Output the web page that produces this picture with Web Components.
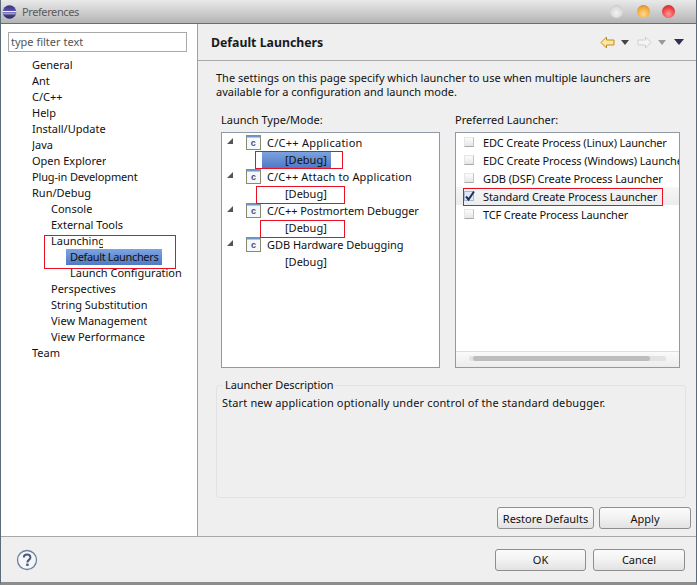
<!DOCTYPE html>
<html>
<head>
<meta charset="utf-8">
<title>Preferences</title>
<style>
html, body { margin: 0; padding: 0; background: #efefef; }
body { font: 11px "Noto Sans", "Liberation Sans", sans-serif; color: #111; }
</style>
</head>
<body>
<pref-window>
  <title-bar slot="title">Preferences</title-bar>
  <pref-tree slot="tree">
    <tree-row>General</tree-row>
    <tree-row>Ant</tree-row>
    <tree-row>C/C++</tree-row>
    <tree-row>Help</tree-row>
    <tree-row>Install/Update</tree-row>
    <tree-row>Java</tree-row>
    <tree-row>Open Explorer</tree-row>
    <tree-row style="letter-spacing:-.15px">Plug-in Development</tree-row>
    <tree-row>Run/Debug</tree-row>
    <tree-row level="1">Console</tree-row>
    <tree-row level="1">External Tools</tree-row>
    <tree-row level="1" clip="52">Launching</tree-row>
    <tree-row level="2" selected style="letter-spacing:-.35px">Default Launchers</tree-row>
    <tree-row level="2" clip="113">Launch Configuration</tree-row>
    <tree-row level="1">Perspectives</tree-row>
    <tree-row level="1" clip="96">String Substitution</tree-row>
    <tree-row level="1">View Management</tree-row>
    <tree-row level="1">View Performance</tree-row>
    <tree-row>Team</tree-row>
  </pref-tree>
  <pref-page slot="page"></pref-page>
  <dialog-footer slot="footer"></dialog-footer>
</pref-window>

<script>
// small helper, every element just sets its own shadow html
function shadow(el, html) {
    el.attachShadow({ mode: 'open' });
    el.shadowRoot.innerHTML = html;
}

class PrefWindow extends HTMLElement {
    connectedCallback() {
        shadow(this, `
<style>
:host { display: flex; flex-direction: column; position: relative; width: 697px; height: 585px; overflow: hidden; box-sizing: border-box;
  border-left: 1px solid #5b6b7a; border-right: 1px solid #5b6b7a; border-bottom: 3px solid #8d8d8d; background: #efefef; }
.main { display: flex; height: 512px; }
.mark { position: absolute; border: 1px solid #e81123; box-sizing: border-box; left: 43px; top: 235px; width: 132px; height: 34px; }
</style>
<slot name="title"></slot>
<div class="main"><slot name="tree"></slot><slot name="page"></slot></div>
<slot name="footer"></slot>
<div class="mark"></div>`);
    }
}

class TitleBar extends HTMLElement {
    connectedCallback() {
        shadow(this, `
<style>
:host { display: flex; align-items: center; height: 24px; box-sizing: border-box; flex: none; padding-left: 1px;
  background: linear-gradient(#e9e9e9, #d2d2d2 45%, #b4b4b4); border-bottom: 1px solid #6d6d6d;
  font: 11px "Noto Sans", "Liberation Sans", sans-serif; letter-spacing: -.4px; color: #5a5a5a; }
svg { margin-right: 5px; }
.ctl { margin-left: auto; display: flex; padding-right: 21px; }
.ctl i { display: block; width: 13px; height: 13px; border-radius: 50%; margin-left: 12px; }
.ctl i.max { margin-left: 14px; }
.min { background: radial-gradient(circle at 50% 60%, #f2f2f2, #d8d8d8 60%, #aaa); }
.max { background: radial-gradient(circle at 50% 70%, #ffd98a, #f0a93c 60%, #a8752a); }
.cls { background: radial-gradient(circle at 50% 70%, #ff9a9a, #ee3b3b 60%, #a82a2a); }
</style>
<svg width="15" height="14" viewBox="0 0 15 14">
  <defs><linearGradient id="sph" x1="0" y1="0" x2="0" y2="1"><stop offset="0" stop-color="#3a2f80"/><stop offset=".45" stop-color="#5a55b0"/><stop offset="1" stop-color="#2a2660"/></linearGradient></defs>
  <circle cx="7.5" cy="7" r="6.8" fill="url(#sph)"/>
  <path d="M.7 6h13.6v1.2H.7zM1.2 8.4h12.6v.8H1.2z" fill="#f1eef8"/>
</svg>
<slot></slot>
<div class="ctl"><i class="min"></i><i class="max"></i><i class="cls"></i></div>`);
    }
}

class PrefTree extends HTMLElement {
    connectedCallback() {
        shadow(this, `
<style>
:host { display: block; width: 197px; flex: none; box-sizing: border-box; background: #fff; border-right: 1px solid #a0a0a0; padding: 8px 0 0 7px; }
.filter { box-sizing: border-box; width: 179px; height: 20px; border: 1px solid #a9a9a9; padding: 0 2px; line-height: 18px; color: #555; margin-bottom: 5px; }
</style>
<div class="filter">type filter text</div>
<slot></slot>`);
    }
}

class TreeRow extends HTMLElement {
    connectedCallback() {
        const level = Number(this.getAttribute('level') || 0);
        const clip = this.getAttribute('clip');
        const selected = this.hasAttribute('selected');
        shadow(this, `
<style>
:host { display: block; height: 16px; line-height: 16px; white-space: nowrap; padding-left: ${24 + level * 19}px; }
span { display: inline-block; vertical-align: top; overflow: hidden; ${clip ? 'width:' + clip + 'px;' : ''} }
.sel { margin-left: -4px; padding: 0 4px; background: linear-gradient(#7ea4e0, #4f79c6); }
</style>
<span class="${selected ? 'sel' : ''}"><slot></slot></span>`);
    }
}

class LaunchRow extends HTMLElement {
    connectedCallback() {
        shadow(this, `
<style>
:host { display: flex; align-items: center; height: 17px; white-space: nowrap; }
.arrow { width: 0; height: 0; border-left: 6px solid transparent; border-bottom: 6px solid #555; margin: 0 13px 3px 5px; }
svg { margin-right: 6px; }
</style>
<i class="arrow"></i>
<svg width="15" height="15" viewBox="0 0 15 15">
  <rect x=".5" y=".5" width="14" height="14" fill="#f5f8fc" stroke="#8a8a6a"/>
  <rect x=".5" y=".5" width="14" height="2" fill="#6f96c8"/>
  <text x="7.5" y="11" text-anchor="middle" font-family="Liberation Sans" font-size="9" font-weight="bold" fill="#35507c">c</text>
</svg>
<slot></slot>`);
    }
}

class ModeRow extends HTMLElement {
    connectedCallback() {
        const selected = this.hasAttribute('selected');
        shadow(this, `
<style>
:host { display: block; height: 17px; margin-left: 40px; white-space: nowrap; }
div { width: 69px; height: 17px; line-height: 17px; padding-left: 23px; box-sizing: border-box; ${selected ? 'background: linear-gradient(#7ea4e0, #4f79c6);' : ''} }
</style>
<div><slot></slot></div>`);
    }
}

class CheckRow extends HTMLElement {
    connectedCallback() {
        const on = this.hasAttribute('checked');
        shadow(this, `
<style>
:host { display: flex; align-items: center; height: 18px; white-space: nowrap; overflow: hidden; ${on ? 'background: linear-gradient(#f6f6f6, #ececec);' : ''} }
.box { position: relative; flex: none; width: 10px; height: 10px; margin: 0 9px 0 8px; box-sizing: border-box; border: 1px solid #e6e6e6; border-right-color: #c4c4c4; border-bottom-color: #a8a8a8; background: linear-gradient(#fcfcfc, #e6e6e6); }
.on { background: #dfe8f5; border-color: #a9b8cf; }
svg { position: absolute; left: -1px; top: -2px; }
</style>
<span class="box ${on ? 'on' : ''}">${on ? '<svg width="12" height="12" viewBox="0 0 12 12"><path d="M2 6.5l2.5 3L10 1.5" fill="none" stroke="#1f2f58" stroke-width="2"/></svg>' : ''}</span>
<slot></slot>`);
    }
}

class PrefButton extends HTMLElement {
    connectedCallback() {
        shadow(this, `
<style>
:host { display: flex; align-items: center; justify-content: center; height: 22px; box-sizing: border-box; border: 1px solid #8e8e8e; border-radius: 3px;
  background: linear-gradient(#fbfbfb, #f3f3f3 45%, #e2e2e2); width: var(--w, 92px); }
</style>
<slot></slot>`);
    }
}

class PrefPage extends HTMLElement {
    connectedCallback() {
        shadow(this, `
<style>
:host { display: block; flex: 1; min-width: 0; }
.head { display: flex; align-items: center; height: 37px; box-sizing: border-box; border-bottom: 1px solid #a8a8a8; padding: 0 12px 0 13px; }
h1 { margin: 0; font: bold 12.3px "Noto Sans", "Liberation Sans", sans-serif; flex: 1; color: #1a1a1a; padding-top: 1px; }
.nav { display: flex; align-items: center; }
.tri { width: 0; height: 0; border: 4px solid transparent; border-top: 5px solid #444; border-bottom: 0; margin: 0 8px 0 6px; }
.tri.off { border-top-color: #999; }
.tri.menu { border-width: 6px 5px 0; border-top-color: #2f2f55; margin: 0 0 0 0; }
.desc { margin: 10px 30px 0 18px; line-height: 14px; }
.cols { display: flex; gap: 15px; margin: 14px 0 0 23px; }
.lab { line-height: 14px; margin-bottom: 5px; }
.list { position: relative; box-sizing: border-box; height: 236px; border: 1px solid #8f9aa5; background: #fff; }
.left { width: 219px; }
.left .list { padding-top: 1px; }
.right { width: 225px; }
.bar { position: absolute; left: 0; right: 0; bottom: 0; height: 15px; border-top: 1px solid #ddd; background: linear-gradient(#fafafa, #ececec); }
.bar::before { content: ""; position: absolute; left: 13px; right: 13px; top: 4px; height: 5px; border-radius: 3px; background: #e2e2e2; }
.bar::after { content: ""; position: absolute; left: 17px; width: 177px; top: 4px; height: 5px; border-radius: 3px; background: #bdbdbd; }
.mark { position: absolute; border: 1px solid #e81123; box-sizing: border-box; height: 18px; }
fieldset { margin: 10px 10px 0 18px; height: 120px; box-sizing: border-box; border: 1px solid #e2e2e2; border-radius: 3px; padding: 3px 5px 0; }
fieldset p { margin: 0; letter-spacing: .14px; }
legend { padding: 0 2px; margin-left: 1px; line-height: 14px; letter-spacing: -.1px; }
.btns { display: flex; justify-content: flex-end; gap: 5px; margin: 9px 5px 0 0; }
</style>
<div class="head">
  <h1>Default Launchers</h1>
  <div class="nav">
    <svg width="15" height="13" viewBox="0 0 15 13"><path d="M1 6.5L6.5 1v3H14v5H6.5v3z" fill="#fbe6a4" stroke="#c58a1c"/></svg>
    <i class="tri"></i>
    <svg width="15" height="13" viewBox="0 0 15 13"><path d="M14 6.5L8.5 1v3H1v5h7.5v3z" fill="#f4f4f4" stroke="#cfcfcf"/></svg>
    <i class="tri off"></i>
    <i class="tri menu"></i>
  </div>
</div>
<div class="desc">The settings on this page specify which launcher to use when multiple launchers are<br>available for a configuration and launch mode.</div>
<div class="cols">
  <div class="left">
    <div class="lab">Launch Type/Mode:</div>
    <div class="list">
      <launch-row style="letter-spacing:.25px">C/C++ Application</launch-row>
      <mode-row selected>[Debug]</mode-row>
      <launch-row style="letter-spacing:.15px">C/C++ Attach to Application</launch-row>
      <mode-row>[Debug]</mode-row>
      <launch-row style="letter-spacing:-.04px">C/C++ Postmortem Debugger</launch-row>
      <mode-row>[Debug]</mode-row>
      <launch-row style="letter-spacing:-.04px">GDB Hardware Debugging</launch-row>
      <mode-row>[Debug]</mode-row>
      <div class="mark" style="left:33px;top:18px;width:88px"></div>
      <div class="mark" style="left:34px;top:53px;width:89px"></div>
      <div class="mark" style="left:38px;top:87px;width:85px"></div>
    </div>
  </div>
  <div class="right">
    <div class="lab">Preferred Launcher:</div>
    <div class="list">
      <check-row style="letter-spacing:-.15px">EDC Create Process (Linux) Launcher</check-row>
      <check-row style="letter-spacing:-.1px">EDC Create Process (Windows) Launcher</check-row>
      <check-row style="letter-spacing:-.1px">GDB (DSF) Create Process Launcher</check-row>
      <check-row checked style="letter-spacing:-.1px">Standard Create Process Launcher</check-row>
      <check-row style="letter-spacing:-.14px">TCF Create Process Launcher</check-row>
      <div class="mark" style="left:7px;top:55px;width:200px"></div>
      <div class="bar"></div>
    </div>
  </div>
</div>
<fieldset>
  <legend>Launcher Description</legend>
  <p>Start new application optionally under control of the standard debugger.</p>
</fieldset>
<div class="btns">
  <pref-button style="--w:97px">Restore Defaults</pref-button>
  <pref-button>Apply</pref-button>
</div>`);
    }
}

class DialogFooter extends HTMLElement {
    connectedCallback() {
        shadow(this, `
<style>
:host { display: flex; align-items: center; flex: 1; box-sizing: border-box; border-top: 1px solid #a8a8a8; padding: 0 11px 0 15px; gap: 7px; }
svg { margin-right: auto; }
</style>
<svg width="22" height="22" viewBox="0 0 22 22">
  <circle cx="11" cy="11" r="9.5" fill="#f4f6f9" stroke="#6d7f9c" stroke-width="1.3"/>
  <path d="M7.8 8.6c0-4.2 6.6-4.2 6.6-.2 0 2.6-3 2.4-3 5" fill="none" stroke="#4a5a78" stroke-width="2"/>
  <rect x="10.2" y="14.6" width="2.4" height="2.4" fill="#4a5a78"/>
</svg>
<pref-button style="--w:91px">OK</pref-button>
<pref-button>Cancel</pref-button>`);
    }
}

customElements.define('pref-window', PrefWindow);
customElements.define('title-bar', TitleBar);
customElements.define('pref-tree', PrefTree);
customElements.define('tree-row', TreeRow);
customElements.define('launch-row', LaunchRow);
customElements.define('mode-row', ModeRow);
customElements.define('check-row', CheckRow);
customElements.define('pref-button', PrefButton);
customElements.define('pref-page', PrefPage);
customElements.define('dialog-footer', DialogFooter);
</script>
</body>
</html>
